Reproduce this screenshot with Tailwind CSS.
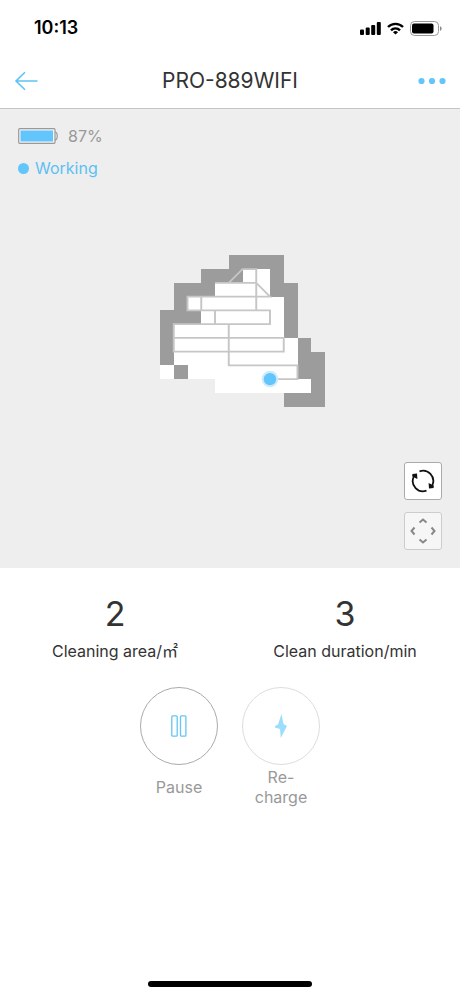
<!DOCTYPE html>
<html lang="en">
<head>
  <meta charset="UTF-8">
  <meta name="viewport" content="width=device-width, initial-scale=1.0">
  <title>PRO-889WIFI</title>
  <script src="https://cdn.jsdelivr.net/npm/@tailwindcss/browser@4"></script>
</head>
<body class="bg-white min-h-screen flex flex-col font-['Inter','Noto_Sans_CJK_SC',sans-serif] text-[#333]">
  <!-- Status bar -->
  <div class="flex items-center justify-between h-14 pl-[34px] pr-[18px] text-black">
    <span class="text-lg font-semibold">10:13</span>
    <div class="flex items-center gap-[6px]">
      <svg class="w-[21px] h-[13px]" viewBox="0 0 21 13">
        <rect x="0" y="7.5" width="4" height="5.5" rx="1"/>
        <rect x="5.7" y="5.5" width="4" height="7.5" rx="1"/>
        <rect x="11.2" y="3" width="4" height="10" rx="1"/>
        <rect x="16.8" y="0" width="4" height="13" rx="1"/>
      </svg>
      <svg class="w-[17px] h-[13px]" viewBox="0 0 17 13" fill="none" stroke="#000" stroke-width="2.4">
        <path d="M1 5a10.5 10.5 0 0 1 15 0"/>
        <path d="M4 8.3a6.3 6.3 0 0 1 9 0"/>
        <path d="M8.5 12.6L6 10.2a3.5 3.5 0 0 1 5 0z" fill="#000" stroke="none"/>
      </svg>
      <svg class="w-8 h-[15px]" viewBox="0 0 32 15">
        <rect x=".5" y=".5" width="28" height="14" rx="4" fill="none" stroke="#999"/>
        <rect x="2" y="2.4" width="21.5" height="10.2" rx="2"/>
        <path d="M30 5.2c2.2.8 2.2 3.8 0 4.6z" fill="#888"/>
      </svg>
    </div>
  </div>

  <!-- Header -->
  <header class="flex items-center justify-between h-[53px] px-[14px] border-b border-[#c4c4c4]">
    <button class="w-8 pb-[2px]" aria-label="Back">
      <svg class="w-6 h-5" viewBox="0 0 24 20" fill="none" stroke="#5ec3f4" stroke-width="1.6">
        <path d="M23.5 10H2M11 1.2L2 10l9 8.8"/>
      </svg>
    </button>
    <h1 class="text-[21px] pb-[2px]">PRO-889WIFI</h1>
    <button class="w-8 pb-[2px] flex justify-end" aria-label="More">
      <svg class="w-7 h-2" viewBox="0 0 28 8" fill="#64c5fa">
        <circle cx="3.5" cy="4" r="3.1"/>
        <circle cx="14" cy="4" r="3.1"/>
        <circle cx="24.5" cy="4" r="3.1"/>
      </svg>
    </button>
  </header>

  <!-- Map -->
  <main class="bg-[#eee] flex flex-col px-[18px] pt-[15px] pb-[18px]">
    <div class="flex items-center gap-[10px] h-6 text-[#999]">
      <svg class="w-10 h-4" viewBox="0 0 40 16">
        <rect x=".7" y=".7" width="36.3" height="14.6" rx="1" fill="#f4f4f4" stroke="#999" stroke-width="1.2"/>
        <path d="M37 4c3 .4 3 7.6 0 8" fill="none" stroke="#999" stroke-width="1.2"/>
        <rect x="2.5" y="2.5" width="32.5" height="11" fill="#62c5fb"/>
      </svg>
      <span>87%</span>
    </div>
    <div class="flex items-center gap-[6px] mt-2 h-6 text-[#5dc1f3]">
      <span class="size-[11px] rounded-full bg-[#62c5fb]"></span>
      <span>Working</span>
    </div>

    <!-- One unit of the viewBox is one map cell -->
    <svg class="w-[165px] h-[152px] mt-[75px] ml-6 self-center" viewBox="0 0 12 11">
      <g fill="#9c9c9c" shape-rendering="crispEdges">
        <path d="M5 0H9V2H10V6H11V7H12V11H9V10H4V8H0V4H1V2H3V1H5Z"/>
      </g>
      <g fill="#fff" shape-rendering="crispEdges">
        <path d="M6 1H8V3H9V6H10V9H11V10H4V9H1V5H3V4H2V3H4V2H6Z"/>
        <rect x="0" y="8" width="1" height="1"/>
      </g>
      <rect x="1" y="8" width="1" height="1" fill="#9c9c9c" shape-rendering="crispEdges"/>
      <g fill="none" stroke="#c6c6c6" stroke-width=".14">
        <path d="M5 2L6 1H7V4M4 2H7L8 3H2V4H8V5H1V7H9V6H1"/>
        <path d="M3 3V4M4 4V5M5 5V8H10V9H8"/>
      </g>
      <circle cx="8" cy="9" r=".6" fill="#cdebfc"/>
      <circle cx="8" cy="9" r=".45" fill="#62c5fb"/>
    </svg>

    <div class="flex flex-col items-end gap-3 mt-[55px]">
      <button class="size-[38px] flex items-center justify-center rounded-[3px] border border-[#aaa] bg-white" aria-label="Rotate map">
        <svg class="size-6" viewBox="0 0 24 24" fill="none" stroke="#111" stroke-width="1.8">
          <path d="M8.5 2.4A10.2 10.2 0 0 1 21.4 16"/>
          <path d="M15.5 21.6A10.2 10.2 0 0 1 2.6 8"/>
          <path d="M17.6 14l.4 5.4 4.6-.4.2-2.600zM6.400 10L6 4.600 1.400 5l-.2 2.600z" fill="#111" stroke="none"/>
        </svg>
      </button>
      <button class="size-[38px] flex items-center justify-center rounded-[3px] border border-[#ccc] bg-[#f6f6f6]" aria-label="Move robot">
        <svg class="size-[26px]" viewBox="0 0 26 26" fill="none" stroke="#888" stroke-width="2">
          <path d="M9.5 4.5l3.5-3 3.5 3M9.5 21.5l3.5 3 3.5-3M4.5 9.5l-3 3.5 3 3.5M21.5 9.5l3 3.5-3 3.5"/>
        </svg>
      </button>
    </div>
  </main>

  <!-- Statistics -->
  <section class="grid grid-cols-2 pt-[26px] text-center">
    <div>
      <p class="text-[34px] leading-10">2</p>
      <p class="mt-[5px]">Cleaning area/㎡</p>
    </div>
    <div>
      <p class="text-[34px] leading-10">3</p>
      <p class="mt-[5px]">Clean duration/min</p>
    </div>
  </section>

  <!-- Actions -->
  <section class="flex justify-center gap-6 mt-6 text-[#999]">
    <button class="w-[78px] flex flex-col items-center">
      <span class="size-[78px] flex items-center justify-center rounded-full border border-[#aaa]">
        <svg class="w-4 h-[22px]" viewBox="0 0 16 22" fill="none" stroke="#64c5f2" stroke-width="1.3">
          <rect x=".8" y=".8" width="5.4" height="20.4" rx="1"/>
          <rect x="9.5" y=".8" width="5.4" height="20.4" rx="1"/>
        </svg>
      </span>
      <span class="flex items-center h-11 leading-5">Pause</span>
    </button>
    <button class="w-[78px] flex flex-col items-center">
      <span class="size-[78px] flex items-center justify-center rounded-full border border-[#ddd]">
        <svg class="w-3 h-6" viewBox="0 0 12 24" fill="#9cddfb">
          <path d="M6.5 0L3 10.5 0 12v1.5L5 15l.8 9L12 12l-3.500-2z"/>
        </svg>
      </span>
      <span class="flex items-center h-11 leading-5">Re-<br>charge</span>
    </button>
  </section>

  <div class="mt-auto mb-[9px] self-center w-[164px] h-[6px] rounded-full bg-black"></div>
</body>
</html>
